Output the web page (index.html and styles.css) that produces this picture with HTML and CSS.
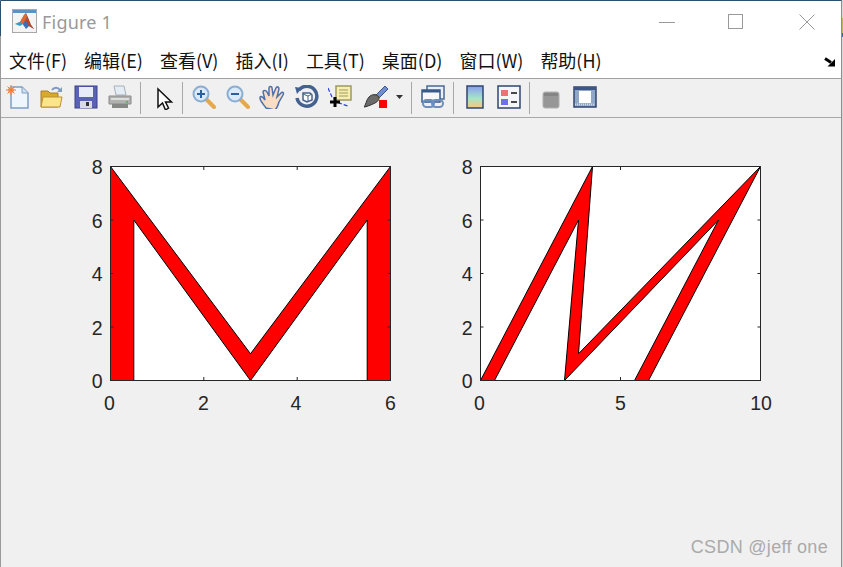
FILE: index.html
```html
<!DOCTYPE html>
<html lang="en">
<head>
  <meta charset="UTF-8">
  <title>Figure 1</title>
  <link rel="stylesheet" href="styles.css">
</head>
<body>

  <div class="window">

    <!-- Window edges, other windows show through here -->
    <div class="edge-left"></div>
    <div class="edge-right"></div>

    <!-- Title bar -->
    <div class="title-bar">
      <svg class="app-icon" width="26" height="25" viewBox="0 0 26 25">
        <rect x="0.5" y="0.5" width="24" height="23" fill="#f4f4f4" stroke="#a8a8a8"/>
        <rect x="1" y="1" width="23" height="3" fill="#5d93c4"/>
        <path d="M3 15l5-2 4-7 2-2 5 12 3 4-5-3-3 3-4-6z" fill="#3a6fb5"/>
        <path d="M8 13l4-7 2-2 1 4-4 7-3-1z" fill="#e8662a"/>
        <path d="M14 4l5 12 3 4-5-3-3-5 1-5z" fill="#c8401c"/>
        <path d="M3 15l5-2 3 2-3 2z" fill="#2ba0c8"/>
      </svg>
      <span class="title-text">Figure 1</span>
      <div class="win-controls">
        <svg width="16" height="16" viewBox="0 0 16 16"><path d="M0 8.500h16" stroke="#999" fill="none"/></svg>
        <svg class="win-max" width="16" height="16" viewBox="0 0 16 16"><rect x="1.500" y="0.500" width="14" height="14" stroke="#999" fill="none"/></svg>
        <svg width="16" height="16" viewBox="0 0 16 16"><path d="M0.500 0.500l15 15M15.500 0.500l-15 15" stroke="#999" fill="none"/></svg>
      </div>
    </div>

    <!-- Menu bar -->
    <div class="menu-bar">
      <span class="menu-item">文件(F)</span>
      <span class="menu-item">编辑(E)</span>
      <span class="menu-item">查看(V)</span>
      <span class="menu-item">插入(I)</span>
      <span class="menu-item">工具(T)</span>
      <span class="menu-item">桌面(D)</span>
      <span class="menu-item">窗口(W)</span>
      <span class="menu-item">帮助(H)</span>
      <svg class="dock-arrow" width="12" height="10" viewBox="0 0 12 10">
        <path d="M1 1.500l6 4" stroke="#000" stroke-width="3" fill="none"/>
        <path d="M11 2v7.500H3.500z" fill="#000"/>
      </svg>
    </div>

    <!-- Toolbar -->
    <div class="toolbar">
      <span class="tool">
        <svg width="24" height="24" viewBox="0 0 24 24">
          <path d="M5 2h11l6 6v15H5z" fill="#eef5fc" stroke="#7e9fc4" stroke-width="1.500"/>
          <path d="M16 2v6h6" fill="#cfe0f2" stroke="#7e9fc4"/>
          <circle cx="5" cy="5" r="3" fill="#f0a070"/>
          <path d="M5 0v10M0 5h10M1.500 1.500l7 7M8.500 1.500l-7 7" stroke="#ea7b45"/>
        </svg>
      </span>
      <span class="tool">
        <svg width="24" height="24" viewBox="0 0 24 24">
          <path d="M1 6h7l2 2h8v14H1z" fill="#d9a92e" stroke="#a9802a"/>
          <path d="M3 12h19l-2 10H1z" fill="#fbe58c" stroke="#bb912e"/>
          <path d="M12 5c2-3 6-3 8 0" stroke="#7d9cbd" stroke-width="2" fill="none"/>
          <path d="M22 2v5h-5z" fill="#7d9cbd"/>
        </svg>
      </span>
      <span class="tool">
        <svg width="24" height="24" viewBox="0 0 24 24">
          <rect x="1" y="1" width="22" height="22" fill="#5a62b8" stroke="#3a4288"/>
          <rect x="5" y="2" width="14" height="10" fill="#e8ecf8"/>
          <rect x="6" y="16" width="12" height="7" fill="#d8dbe6"/>
          <rect x="12" y="17" width="3" height="4" fill="#333"/>
        </svg>
      </span>
      <span class="tool">
        <svg width="24" height="24" viewBox="0 0 24 24">
          <path d="M6 1h10l2 9H8z" fill="#e4edf5" stroke="#a4b0b8"/>
          <path d="M1 11h22v8H1z" fill="#b0b2b0" stroke="#8a8a8a"/>
          <path d="M4 19h16v4H4z" fill="#868886"/>
          <path d="M3 13h18v2H3z" fill="#dcdedc"/>
          <circle cx="19" cy="17" r="1" fill="#5a5"/>
        </svg>
      </span>
      <span class="tool-sep"></span>
      <span class="tool tool-pointer">
        <svg width="24" height="24" viewBox="0 0 24 24">
          <path d="M6 3v18l4.500-4 3 7 3-2-3-6h6z" fill="#fff" stroke="#111" stroke-width="1.500"/>
        </svg>
      </span>
      <span class="tool-sep"></span>
      <span class="tool">
        <svg width="24" height="24" viewBox="0 0 24 24">
          <path d="M14 14l8 8" stroke="#e6a84c" stroke-width="4" stroke-linecap="round"/>
          <circle cx="9" cy="9" r="7.500" fill="#dce9f6" stroke="#8aaed4" stroke-width="2"/>
          <path d="M5 9h8M9 5v8" stroke="#2d5fa0" stroke-width="2"/>
        </svg>
      </span>
      <span class="tool">
        <svg width="24" height="24" viewBox="0 0 24 24">
          <path d="M14 14l8 8" stroke="#e6a84c" stroke-width="4" stroke-linecap="round"/>
          <circle cx="9" cy="9" r="7.500" fill="#dce9f6" stroke="#8aaed4" stroke-width="2"/>
          <path d="M5 9h8" stroke="#2d5fa0" stroke-width="2"/>
        </svg>
      </span>
      <span class="tool">
        <svg width="26" height="24" viewBox="0 0 26 24">
          <path d="M7 23C5 20 1 16 1 13s3-1 5 2L4 7c0-2 3-2 4 0l2 4 0-8c0-2 3-2 3 0l1 7 3-7c1-2 3-1 3 1l-2 8 4-4c2-2 3 0 2 2l-4 7c-1 4-2 6-4 8z" fill="#fbdcc4" stroke="#4d70ac" stroke-width="1.500"/>
        </svg>
      </span>
      <span class="tool">
        <svg width="25" height="24" viewBox="0 0 25 24">
          <path d="M5 5A10 10 0 1 1 3 13" fill="none" stroke="#44618f" stroke-width="3.500"/>
          <path d="M1 2l7 1-5 6z" fill="#44618f"/>
          <path d="M9 8h7l2 2v5l-5 2-4-2z" fill="#fff" stroke="#44618f" stroke-width="1.500"/>
          <path d="M9 9l5 2v6M14 11l4-2" stroke="#44618f" fill="none"/>
        </svg>
      </span>
      <span class="tool">
        <svg width="24" height="24" viewBox="0 0 24 24">
          <path d="M0 3l4 9 7 6 9 3" fill="none" stroke="#2c3fe0" stroke-dasharray="4 2" stroke-width="1.200"/>
          <rect x="8" y="1" width="15" height="14" fill="#f7eeb0" stroke="#9c9a60" stroke-width="1.500"/>
          <path d="M11 5h9M11 8h9M11 11h9" stroke="#9c9a60"/>
          <path d="M7 12v10M2 17h10" stroke="#000" stroke-width="3"/>
        </svg>
      </span>
      <span class="tool">
        <svg class="brush" width="24" height="24" viewBox="0 0 24 24">
          <path d="M12 10l9-9 3 3-9 9z" fill="#6f8fd0" stroke="#3d558e"/>
          <path d="M5 12c3-3 7-3 9-1s1 5-3 7-9 4-11 4c2-2 2-7 5-10z" fill="#6b6b6b" stroke="#333"/>
          <rect x="15" y="15" width="8" height="8" fill="#ff0000"/>
        </svg>
      </span>
      <span class="tool tool-drop">
        <svg width="7" height="4" viewBox="0 0 7 4"><path d="M0 0h7L3.500 4z" fill="#333"/></svg>
      </span>
      <span class="tool-sep"></span>
      <span class="tool">
        <svg width="24" height="24" viewBox="0 0 24 24">
          <rect x="6" y="1" width="17" height="13" fill="#eaf0f8" stroke="#4a6a94" stroke-width="1.500"/>
          <rect x="1" y="5" width="18" height="12" fill="#f6f8fb" stroke="#3a5a88" stroke-width="1.500"/>
          <rect x="1" y="5" width="18" height="2.500" fill="#3a5a88"/>
          <rect x="2" y="15" width="11" height="7" rx="3.500" fill="none" stroke="#6d8fb8" stroke-width="2"/>
          <rect x="11" y="15" width="11" height="7" rx="3.500" fill="none" stroke="#6d8fb8" stroke-width="2"/>
        </svg>
      </span>
      <span class="tool-sep"></span>
      <span class="tool">
        <svg width="18" height="24" viewBox="0 0 18 24">
          <defs>
            <linearGradient id="cbar" x1="0" y1="0" x2="0" y2="1">
              <stop offset="0" stop-color="#8a9cf0"/>
              <stop offset="0.550" stop-color="#a4e4c8"/>
              <stop offset="1" stop-color="#fbc878"/>
            </linearGradient>
          </defs>
          <rect x="1" y="1" width="16" height="22" fill="url(#cbar)" stroke="#31456f" stroke-width="1.500"/>
        </svg>
      </span>
      <span class="tool">
        <svg width="24" height="24" viewBox="0 0 24 24">
          <rect x="1" y="1" width="22" height="22" fill="#f4f6fa" stroke="#31456f" stroke-width="1.500"/>
          <rect x="4" y="5" width="7" height="6" fill="#ee7070"/>
          <rect x="4" y="14" width="7" height="6" fill="#6f70ee"/>
          <path d="M14 8h6M14 17h6" stroke="#111" stroke-width="1.500"/>
        </svg>
      </span>
      <span class="tool-sep"></span>
      <span class="tool tool-gray">
        <svg width="18" height="18" viewBox="0 0 18 18">
          <rect x="1" y="1" width="16" height="16" rx="2" fill="#979797" stroke="#b0b0b0"/>
          <rect x="2" y="2" width="14" height="3" fill="#858585"/>
        </svg>
      </span>
      <span class="tool">
        <svg width="24" height="24" viewBox="0 0 24 24">
          <rect x="1" y="2" width="22" height="20" fill="#8fa8c8" stroke="#31456f" stroke-width="1.500"/>
          <rect x="1" y="2" width="22" height="3" fill="#3d5688"/>
          <rect x="6" y="6" width="12" height="12" fill="#fff"/>
          <path d="M2 19.500h20" stroke="#cfd8e4" stroke-width="2" stroke-dasharray="1 1"/>
        </svg>
      </span>
    </div>

    <!-- Figure area -->
    <div class="figure">
      <svg class="plot" width="330" height="270" viewBox="0 0 330 270">
        <rect x="30.500" y="16.500" width="280" height="214" fill="#fff"/>
        <polygon points="30.500,230.500 30.500,16.500 170.500,203.750 310.500,16.500 310.500,230.500 287.200,230.500 287.200,70 170.500,230.500 53.800,70 53.800,230.500" fill="#f00" stroke="#000"/>
        <path class="tick" d="M123.800 227v3.500M217.200 227v3.500M123.800 16.500v3.500M217.200 16.500v3.500"/>
        <path class="tick" d="M30.500 177h3M30.500 123.500h3M30.500 70h3M307.500 177h3M307.500 123.500h3M307.500 70h3"/>
        <rect class="axes-box" x="30.500" y="16.500" width="280" height="214"/>
        <g class="y-labels">
          <text x="22.500" y="24">8</text>
          <text x="22.500" y="78">6</text>
          <text x="22.500" y="131">4</text>
          <text x="22.500" y="185">2</text>
          <text x="22.500" y="238">0</text>
        </g>
        <g class="x-labels">
          <text x="29.500" y="260">0</text>
          <text x="123.500" y="260">2</text>
          <text x="216" y="260">4</text>
          <text x="310.500" y="260">6</text>
        </g>
      </svg>
      <svg class="plot" width="330" height="270" viewBox="0 0 330 270">
        <rect x="30.500" y="16.500" width="280" height="214" fill="#fff"/>
        <polygon points="30.500,230.500 142.500,16.500 128.500,203.750 310.500,16.500 198.500,230.500 184.500,230.500 268.500,70 114.500,230.500 128.500,70 44.500,230.500" fill="#f00" stroke="#000"/>
        <path class="tick" d="M170.500 227v3.500M170.500 16.500v3.500"/>
        <path class="tick" d="M30.500 177h3M30.500 123.500h3M30.500 70h3M307.500 177h3M307.500 123.500h3M307.500 70h3"/>
        <rect class="axes-box" x="30.500" y="16.500" width="280" height="214"/>
        <g class="y-labels">
          <text x="22.500" y="24">8</text>
          <text x="22.500" y="78">6</text>
          <text x="22.500" y="131">4</text>
          <text x="22.500" y="185">2</text>
          <text x="22.500" y="238">0</text>
        </g>
        <g class="x-labels">
          <text x="29.500" y="260">0</text>
          <text x="170.500" y="260">5</text>
          <text x="311" y="260">10</text>
        </g>
      </svg>
    </div>

    <div class="watermark">CSDN @jeff one</div>
  </div>

</body>
</html>
```

FILE: styles.css
```css
html, body {
  margin: 0;
  padding: 0;
  height: 100%;
  overflow: hidden;
}

body {
  background: #d8d8d8;
  font-family: 'Noto Sans', 'Noto Sans CJK SC', sans-serif;
}

.window {
  position: relative;
  width: 842px;
  height: 100%;
  box-sizing: border-box;
  background: #f0f0f0;
  border-left: 1px solid #9a9a9a;
  border-right: 1px solid #8e8e8e;
  border-top: 1px solid #2c4f6e;
  display: flex;
  flex-direction: column;
}

.edge-left {
  position: absolute;
  left: -1px;
  top: 0;
  width: 1px;
  height: 35px;
  background: #2c4f6e;
}

.edge-right {
  position: absolute;
  left: 841px;
  top: 17px;
  width: 2px;
  height: 19px;
  background: linear-gradient(#c9b25a 0 80%, #2c6aa8 80%);
}

.title-bar {
  height: 43px;
  background: #fff;
  display: flex;
  align-items: center;
}

.app-icon {
  margin-left: 11px;
  margin-right: 4px;
  margin-top: -2px;
}

.title-text {
  color: #999;
  font-size: 18px;
  letter-spacing: 0.2px;
  margin-top: -2px;
}

.win-controls {
  margin-left: auto;
  display: flex;
  gap: 54px;
  padding-right: 26px;
  margin-top: -1px;
}

.win-max {
  margin-left: -2px;
  margin-right: 2px;
}

.menu-bar {
  height: 32px;
  padding-bottom: 2px;
  background: #fff;
  border-bottom: 1px solid #a0a0a0;
  display: flex;
  align-items: center;
  gap: 17px;
  padding-left: 8px;
  font-family: 'Noto Sans CJK SC', sans-serif;
  font-size: 18px;
  color: #111;
}

.dock-arrow {
  margin-left: auto;
  margin-right: 5px;
  margin-top: 4px;
}

.toolbar {
  height: 38px;
  background: #f0f0f0;
  border-bottom: 1px solid #a8a8a8;
  display: flex;
  align-items: center;
}

.tool {
  width: 34px;
  height: 24px;
  margin-bottom: 3px;
  display: flex;
  align-items: center;
  justify-content: center;
}

.tool svg {
  filter: blur(0.35px);
}

.tool-pointer svg {
  margin-left: 3px;
  margin-top: 3px;
}

.tool-gray {
  margin-top: 4px;
  margin-bottom: 0;
}

.brush {
  margin-left: 4px;
}

.tool-drop {
  width: 17px;
}

.tool-sep {
  width: 1px;
  height: 32px;
  background: #a8a8a8;
  margin: 0 4px 0 3px;
}

.figure {
  flex: 1;
  display: flex;
  gap: 40px;
  padding: 32px 0 0 79px;
}

.plot {
  flex: none;
}

.plot text {
  font-family: 'Liberation Sans', Arial, sans-serif;
  font-size: 19.500px;
  fill: #262626;
}

.y-labels text {
  text-anchor: end;
}

.x-labels text {
  text-anchor: middle;
}

.tick {
  stroke: #262626;
  fill: none;
}

.axes-box {
  stroke: #262626;
  fill: none;
}

.watermark {
  position: absolute;
  right: 13px;
  bottom: 9px;
  font-family: 'Liberation Sans', Arial, sans-serif;
  font-size: 18px;
  color: #aaa;
  letter-spacing: 0.3px;
}
```
